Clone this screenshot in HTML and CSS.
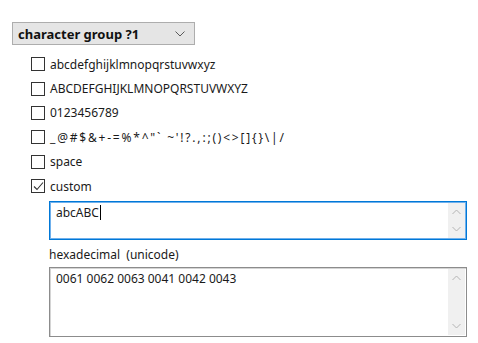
FILE: index.html
```html
<!doctype html>
<html lang="en">
<head>
  <meta charset="UTF-8">
  <title>character group</title>
  <link rel="stylesheet" href="styles.css">
</head>
<body>
  <div class="panel">
    <div class="combo">
      <span class="combo-text">character group ?1</span>
      <svg class="combo-arrow" width="10" height="6" viewBox="0 0 10 6"><path d="M0.5 0.5 L5 5 L9.5 0.5" fill="none" stroke="#5a5a5a" stroke-width="1"/></svg>
    </div>

    <div class="options">
      <label class="opt"><span class="box"></span>abcdefghijklmnopqrstuvwxyz</label>
      <label class="opt"><span class="box"></span>ABCDEFGHIJKLMNOPQRSTUVWXYZ</label>
      <label class="opt"><span class="box"></span>0123456789</label>
      <label class="opt"><span class="box"></span><span class="symbols">_@#$&amp;+-=%*^"` ~'!?.,:;()&lt;&gt;[]{}\|/</span></label>
      <label class="opt"><span class="box"></span>space</label>
      <label class="opt"><span class="box checked">
        <svg width="11" height="11" viewBox="0 0 11 11"><path d="M1 5.5 L4 8.5 L10 1.5" fill="none" stroke="#333" stroke-width="1.1"/></svg>
      </span>custom</label>
    </div>

    <div class="custom">
      <div class="edit focused">
        <div class="edit-text">abcABC<span class="caret"></span></div>
        <div class="scroll">
          <svg width="9" height="6" viewBox="0 0 9 6"><path d="M0.5 5 L4.5 1 L8.5 5" fill="none" stroke="#b4b4b4"/></svg>
          <svg width="9" height="6" viewBox="0 0 9 6"><path d="M0.5 1 L4.5 5 L8.5 1" fill="none" stroke="#b4b4b4"/></svg>
        </div>
      </div>

      <div class="hex-label">hexadecimal&nbsp; (unicode)</div>

      <div class="edit hex">
        <div class="edit-text">0061 0062 0063 0041 0042 0043</div>
        <div class="scroll">
          <svg width="9" height="6" viewBox="0 0 9 6"><path d="M0.5 5 L4.5 1 L8.5 5" fill="none" stroke="#b4b4b4"/></svg>
          <svg width="9" height="6" viewBox="0 0 9 6"><path d="M0.5 1 L4.5 5 L8.5 1" fill="none" stroke="#b4b4b4"/></svg>
        </div>
      </div>
    </div>
  </div>
</body>
</html>
```
FILE: styles.css
```css
body {
  margin: 0;
  background: #fff;
  font-family: 'Noto Sans', 'Open Sans', sans-serif;
  font-size: 12px;
  color: #1a1a1a;
}
.panel {
  width: 478px;
  height: 343px;
  overflow: hidden;
}
.combo {
  box-sizing: border-box;
  margin: 22px 0 0 12px;
  width: 183px;
  height: 23px;
  background: #e5e5e5;
  border: 1px solid #adadad;
  display: flex;
  align-items: center;
  justify-content: space-between;
  padding: 0 9px 0 5px;
}
.combo-text {
  font-weight: bold;
  font-size: 13px;
  color: #111;
}
.options {
  margin: 7px 0 0 31px;
  display: flex;
  flex-direction: column;
}
.opt {
  height: 24.4px;
  display: flex;
  align-items: center;
}
.box {
  box-sizing: border-box;
  width: 14px;
  height: 14px;
  border: 1px solid #333;
  background: #fff;
  margin-right: 5px;
  display: flex;
  align-items: center;
  justify-content: center;
}
.symbols {
  letter-spacing: 1.8px;
}
.custom {
  margin: 3px 0 0 49px;
  width: 418px;
}
.edit {
  box-sizing: border-box;
  display: flex;
  background: #fff;
}
.edit.focused {
  height: 39px;
  border: 1px solid #0078d7;
  box-shadow: inset 0 0 0 1px #6fb0ec;
}
.edit.hex {
  height: 70px;
  margin-top: 4px;
  border: 1px solid #8c8c8c;
  box-shadow: inset 1px 1px 0 #d4d4d4;
}
.edit-text {
  flex: 1;
  padding: 2px 6px;
  line-height: 18px;
}
.caret {
  display: inline-block;
  width: 1px;
  height: 15px;
  background: #000;
  vertical-align: -3px;
  margin-left: 1px;
}
.scroll {
  width: 17px;
  margin: 1px 1px 1px 0;
  background: #f0f0f0;
  display: flex;
  flex-direction: column;
  justify-content: space-between;
  align-items: center;
  padding: 6px 0;
}
.hex-label {
  margin-top: 7px;
  line-height: 16px;
}
```
